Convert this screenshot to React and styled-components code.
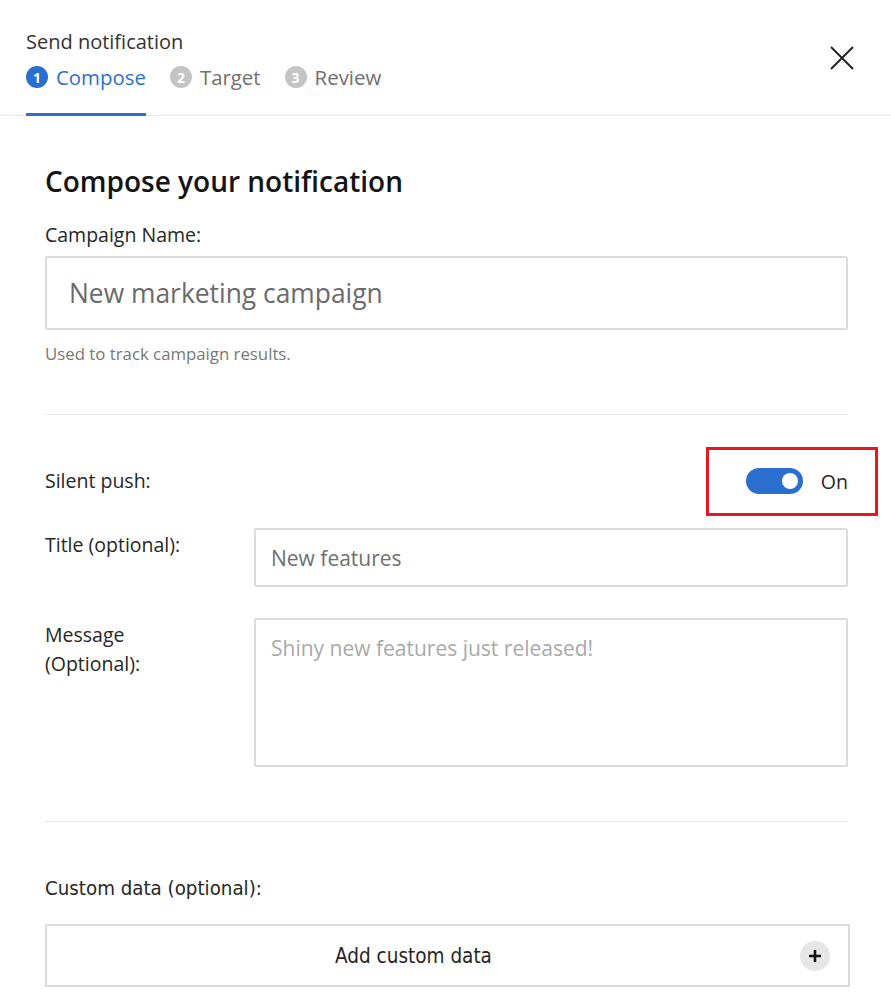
import React from 'react'
import styled, { createGlobalStyle } from 'styled-components'

const GlobalStyle = createGlobalStyle`
  html, body {
    margin: 0;
    padding: 0;
    background: #fff;
  }
  body {
    font-family: 'Open Sans', 'Noto Sans', sans-serif;
    color: #1f1f1f;
  }
`

const Panel = styled.div`
  width: 891px;
  min-height: 1008px;
  background: #fff;
`

const Header = styled.div`
  display: flex;
  justify-content: space-between;
  align-items: flex-start;
  padding: 0 37px 0 26px;
  border-bottom: 1px solid #e6e6e6;
`

const HeaderText = styled.div`
  padding-top: 29px;
`

const DialogTitle = styled.div`
  font-size: 20px;
  line-height: 26px;
  color: #333;
`

const Steps = styled.div`
  display: flex;
  gap: 24px;
  margin-top: 8px;
  margin-bottom: -1px;
`

const Step = styled.div`
  display: flex;
  align-items: center;
  gap: 8px;
  height: 28px;
  padding-bottom: 22px;
  font-size: 20.4px;
  color: ${p => (p.active ? '#2a6fcf' : '#6f6f6f')};
  border-bottom: 3px solid ${p => (p.active ? '#2a6fcf' : 'transparent')};
`

const StepNum = styled.span`
  display: inline-flex;
  align-items: center;
  justify-content: center;
  width: 22px;
  height: 22px;
  border-radius: 50%;
  background: ${p => (p.active ? '#2a6fcf' : '#c4c4c4')};
  color: #fff;
  font-size: 14px;
  font-weight: 700;
`

const CloseButton = styled.button`
  border: 0;
  background: none;
  padding: 0;
  margin-top: 46px;
  width: 24px;
  height: 24px;
  cursor: pointer;
`

const Body = styled.div`
  padding: 0 43px 0 45px;
`

const Heading = styled.h1`
  margin: 0;
  padding-top: 46px;
  font-size: 28px;
  line-height: 38px;
  font-weight: 600;
  color: #141414;
`

const FieldLabel = styled.div`
  font-size: 19.5px;
  line-height: 28px;
  color: #262626;
`

const TopLabel = styled(FieldLabel)`
  margin-top: 21px;
  margin-bottom: 7px;
`

const BigInput = styled.input`
  box-sizing: border-box;
  display: block;
  width: 100%;
  height: 74px;
  border: 2px solid #dcdcdc;
  border-radius: 2px;
  padding: 0 22px;
  font-family: inherit;
  font-size: 26.4px;
  color: #333;
  &::placeholder {
    color: #6b6b6b;
  }
`

const Helper = styled.div`
  margin-top: 12px;
  font-size: 16.8px;
  line-height: 24px;
  color: #777;
`

const Divider = styled.hr`
  border: 0;
  border-top: 1px solid #e6e6e6;
  margin: ${p => p.m || '0'};
`

const Row = styled.div`
  display: grid;
  grid-template-columns: 209px 1fr;
  align-items: start;
  margin-top: ${p => p.mt || '0'};
`

const SwitchRow = styled.div`
  display: flex;
  justify-content: space-between;
  align-items: center;
  height: 28px;
  margin-top: 52px;
`

const SwitchGroup = styled.div`
  position: relative;
  display: flex;
  align-items: center;
  gap: 18px;
`

const Highlight = styled.div`
  position: absolute;
  left: -40px;
  right: -30px;
  top: -21px;
  bottom: -21px;
  border: 3px solid #e8161f;
  pointer-events: none;
`

const Toggle = styled.div`
  width: 57px;
  height: 26px;
  border-radius: 13px;
  background: #2a6fcf;
  display: flex;
  align-items: center;
  justify-content: flex-end;
  padding: 0 5px;
  box-sizing: border-box;
`

const Knob = styled.span`
  width: 16px;
  height: 16px;
  border-radius: 50%;
  background: #fff;
`

const SwitchText = styled.span`
  font-size: 19.5px;
  color: #262626;
`

const TextInput = styled.input`
  box-sizing: border-box;
  width: 100%;
  height: 59px;
  border: 2px solid #dcdcdc;
  border-radius: 2px;
  padding: 0 15px;
  font-family: inherit;
  font-size: 21px;
  &::placeholder {
    color: #6f6f6f;
  }
`

const TextArea = styled.textarea`
  box-sizing: border-box;
  width: 100%;
  height: 149px;
  border: 2px solid #dcdcdc;
  border-radius: 2px;
  padding: 14px 15px;
  font-family: inherit;
  font-size: 21px;
  line-height: 28px;
  resize: none;
  &::placeholder {
    color: #a9a9a9;
  }
`

const RowLabel = styled(FieldLabel)`
  line-height: 29px;
  padding-top: ${p => p.pt || '0'};
`

const CustomLabel = styled.div`
  font-family: 'DejaVu Sans Condensed', 'Liberation Sans Narrow', sans-serif;
  font-stretch: condensed;
  font-size: 20.3px;
  line-height: 28px;
  color: #262626;
  margin-bottom: 22px;
`

const AddBox = styled.button`
  box-sizing: border-box;
  width: calc(100% + 2px);
  height: 63px;
  display: flex;
  align-items: center;
  background: #fff;
  border: 2px solid #dcdcdc;
  padding: 0 18px 0 0;
  cursor: pointer;
`

const AddText = styled.span`
  flex: 1;
  text-align: center;
  font-family: 'DejaVu Sans Condensed', 'Liberation Sans Narrow', sans-serif;
  font-stretch: condensed;
  font-size: 20.5px;
  color: #262626;
  padding-right: 20px;
`

const PlusCircle = styled.span`
  width: 30px;
  height: 30px;
  border-radius: 50%;
  background: #e6e6e6;
  display: flex;
  align-items: center;
  justify-content: center;
`

const steps = [
  { n: 1, label: 'Compose', active: true },
  { n: 2, label: 'Target' },
  { n: 3, label: 'Review' },
]

export default function App() {
  return (
    <Panel>
      <GlobalStyle />
      <Header>
        <HeaderText>
          <DialogTitle>Send notification</DialogTitle>
          <Steps>
            {steps.map(s => (
              <Step key={s.n} active={s.active}>
                <StepNum active={s.active}>{s.n}</StepNum>
                {s.label}
              </Step>
            ))}
          </Steps>
        </HeaderText>
        <CloseButton aria-label="Close">
          <svg width="24" height="24" viewBox="0 0 24 24">
            <path d="M1 1L23 23M23 1L1 23" stroke="#222" strokeWidth="2" />
          </svg>
        </CloseButton>
      </Header>

      <Body>
        <Heading>Compose your notification</Heading>
        <TopLabel>Campaign Name:</TopLabel>
        <BigInput placeholder="New marketing campaign" />
        <Helper>Used to track campaign results.</Helper>

        <Divider m="48px 0 0" />

        <SwitchRow>
          <FieldLabel>Silent push:</FieldLabel>
          <SwitchGroup>
            <Toggle>
              <Knob />
            </Toggle>
            <SwitchText>On</SwitchText>
            <Highlight />
          </SwitchGroup>
        </SwitchRow>

        <Row mt="33px">
          <RowLabel pt="2px">Title (optional):</RowLabel>
          <TextInput placeholder="New features" />
        </Row>

        <Row mt="31px">
          <RowLabel pt="2px">
            Message
            <br />
            (Optional):
          </RowLabel>
          <TextArea placeholder="Shiny new features just released!" />
        </Row>

        <Divider m="54px 0 52px" />

        <CustomLabel>Custom data (optional):</CustomLabel>
        <AddBox>
          <AddText>Add custom data</AddText>
          <PlusCircle>
            <svg width="14" height="14" viewBox="0 0 14 14">
              <path d="M7 1V13M1 7H13" stroke="#111" strokeWidth="2.6" />
            </svg>
          </PlusCircle>
        </AddBox>
      </Body>
    </Panel>
  )
}
